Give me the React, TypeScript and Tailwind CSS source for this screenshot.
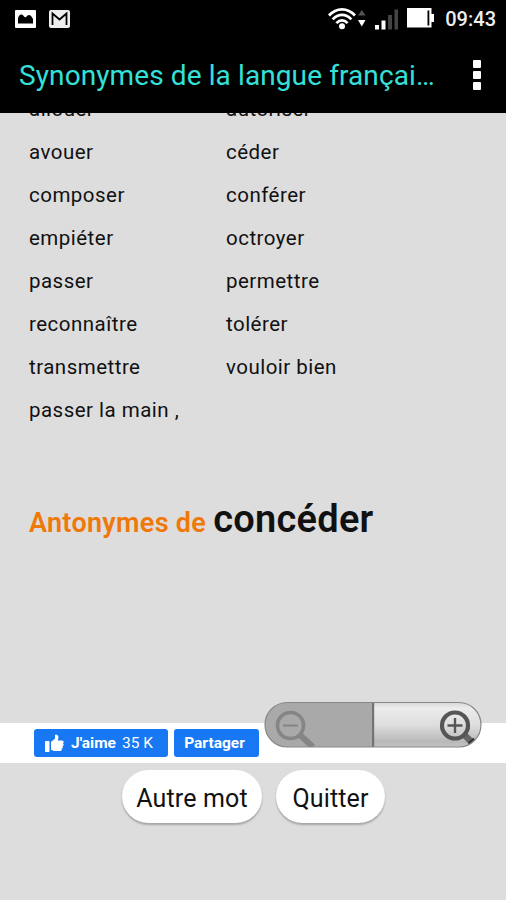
const synonyms = [
  ['allouer', 'autoriser'],
  ['avouer', 'céder'],
  ['composer', 'conférer'],
  ['empiéter', 'octroyer'],
  ['passer', 'permettre'],
  ['reconnaître', 'tolérer'],
  ['transmettre', 'vouloir bien'],
  ['passer la main ,', ''],
];

const StatusBar = () => {
  return (
    <div className="flex h-[37px] items-center justify-between pl-[15px] pr-[11px]">
      <div className="flex items-center gap-[13px]">
        <svg width="21" height="18" viewBox="0 0 21 18">
          <rect width="21" height="18" rx="1" fill="#fff" />
          <path d="M3 13.5V8C4.5 4 7 3.5 9 6.5L10.5 7.5L12 6C14 4 16 5 18 9V13.5Z" fill="#000" />
        </svg>
        <svg width="21" height="18" viewBox="0 0 21 18">
          <rect width="21" height="18" rx="2" fill="#eee" />
          <path d="M3.5 15V3.5L10.5 9.5L17.5 3.5V15" fill="none" stroke="#000" strokeWidth="1.8" />
        </svg>
      </div>
      <div className="flex items-center">
        <svg width="110" height="26" viewBox="0 0 110 26">
          <g fill="none" stroke="#fff" strokeWidth="2.7">
            <path d="M1 9.5C8.5 1.3 19.5 1.3 27 9.5" />
            <path d="M4.7 13.4C10.2 7.4 17.8 7.4 23.3 13.4" />
            <path d="M8.4 17.2C12 13.3 16 13.3 19.6 17.2" />
          </g>
          <circle cx="14" cy="20.3" r="3" fill="#fff" />
          <path d="M30 9.5L33.8 4L37.5 9.5Z" fill="#555" />
          <path d="M30 14H37.5L33.8 20.5Z" fill="#fff" />
          <rect x="47" y="19" width="4" height="4.5" fill="#fff" />
          <rect x="53.5" y="14.5" width="4" height="9" fill="#fff" />
          <rect x="60" y="9" width="4" height="14.5" fill="#444" />
          <rect x="66.5" y="3.5" width="3.5" height="20" fill="#444" />
          <path d="M79 2H103.5V8H106V16H103.5V21.5H79Z" fill="#fff" />
          <rect x="99.5" y="4.5" width="1.8" height="15" fill="#000" />
        </svg>
        <span className="ml-[7px] mr-[-1px] text-[20px] font-medium leading-none text-[#eee]">09:43</span>
      </div>
    </div>
  );
};

const ZoomControls = () => {
  return (
    <svg className="absolute left-[264px] top-[-22px]" width="219" height="48" viewBox="0 0 219 48">
      <defs>
        <linearGradient id="zoomIn" x1="0" y1="0" x2="0" y2="1">
          <stop offset="0" stopColor="#d2d2d2" />
          <stop offset="0.15" stopColor="#ececec" />
          <stop offset="0.5" stopColor="#dedede" />
          <stop offset="0.85" stopColor="#b8b8b8" />
          <stop offset="1" stopColor="#c8c8c8" />
        </linearGradient>
        <clipPath id="zoomShape">
          <rect x="1" y="1.5" width="216" height="44.5" rx="22.2" />
        </clipPath>
      </defs>
      <g clipPath="url(#zoomShape)">
        <rect width="109" height="48" fill="#a9a9a9" />
        <rect x="109" width="110" height="48" fill="url(#zoomIn)" />
        <g stroke="#858585" fill="none">
          <path d="M36 34L49 46" strokeWidth="6" />
          <circle cx="26.5" cy="24.5" r="13" strokeWidth="3.6" />
          <path d="M19 24.5H34" strokeWidth="2" />
        </g>
        <g stroke="#555" fill="none">
          <path d="M200 33.5L208.5 42" stroke="#666" strokeWidth="6.5" />
          <path d="M204.5 42.5L210 37.5" stroke="#333" strokeWidth="2.2" />
          <circle cx="191" cy="24.5" r="13" strokeWidth="4.2" />
          <path d="M183.5 24.5H198.5M191 17V32" strokeWidth="2.4" />
        </g>
        <rect x="108" width="2.2" height="48" fill="#737373" />
      </g>
      <rect x="1" y="1.5" width="216" height="44.5" rx="22.2" fill="none" stroke="#888" strokeWidth="1.2" />
    </svg>
  );
};

const App = () => {
  return (
    <div className="flex h-[900px] w-[506px] flex-col overflow-hidden bg-[#ddd] font-[Roboto,sans-serif] text-[#111]">
      <header className="h-[113px] shrink-0 bg-black">
        <StatusBar />
        <div className="flex h-[76px] items-center justify-between pl-[19px] pr-[25px]">
          <h1 className="whitespace-nowrap pt-[2px] text-[28px] leading-none tracking-[0.1px] text-[#35e0da]">
            Synonymes de la langue françai…
          </h1>
          <div className="flex flex-col gap-[3px]">
            <span className="h-2 w-2 rounded-[1px] bg-white"></span>
            <span className="h-2 w-2 rounded-[1px] bg-white"></span>
            <span className="h-2 w-2 rounded-[1px] bg-white"></span>
          </div>
        </div>
      </header>

      <main className="h-[610px] shrink-0 overflow-hidden pl-[29px]">
        <div className="-mt-[25px]">
          {synonyms.map(([left, right]) => (
            <div key={left} className="grid h-[43px] grid-cols-[197px_1fr] items-center text-[20.5px] tracking-[0.48px]">
              <span>{left}</span>
              <span>{right}</span>
            </div>
          ))}
        </div>
        <h2 className="mt-[62px] whitespace-nowrap font-semibold leading-[50px]">
          <span className="text-[27px] tracking-[0.3px] text-[#f07808]">Antonymes de </span>
          <span className="text-[38px] tracking-[0.25px]">concéder</span>
        </h2>
      </main>

      <div className="relative flex h-10 shrink-0 items-center gap-[6px] bg-white pl-[34px]">
        <button className="flex h-7 w-[134px] items-center rounded-[3px] bg-[#1877f2] pl-[11px] text-[15.5px] text-white">
          <svg width="19" height="18" viewBox="0 0 19 18" fill="#fff">
            <rect y="7" width="4.5" height="11" rx="0.8" />
            <path d="M6 8L10 4.5V1C10 0 13.5-.2 13.5 3.5L12.8 6.5H17C18.8 6.5 19.2 8.5 18 9.3C19 10.3 18.6 11.8 17.5 12.2C18.2 13.3 17.5 14.5 16.6 14.8C17 16 16.2 17 15 17H9L6 15.8Z" />
          </svg>
          <span className="ml-[7px] pt-[2px] font-bold">J'aime</span>
          <span className="ml-[6px] pt-[2px]">35 K</span>
        </button>
        <button className="h-7 w-[85px] rounded-[3px] bg-[#1877f2] pr-1 pt-[2px] text-[15.5px] font-bold text-white">
          Partager
        </button>
        <ZoomControls />
      </div>

      <footer className="flex gap-[14px] pl-[122px] pt-[7px] text-[25px]">
        <button className="h-[53px] w-[140px] rounded-full bg-white pt-[4px] tracking-[0.15px] shadow-[0_2px_2px_rgba(0,0,0,0.25)]">
          Autre mot
        </button>
        <button className="h-[53px] w-[109px] rounded-full bg-white pt-[4px] tracking-[0.15px] shadow-[0_2px_2px_rgba(0,0,0,0.25)]">
          Quitter
        </button>
      </footer>
    </div>
  );
};

export default App;
